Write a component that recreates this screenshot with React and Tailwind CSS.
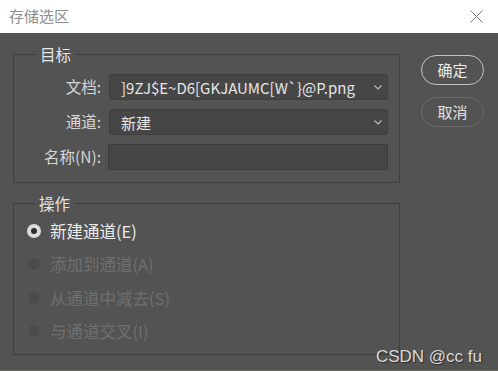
const cjk = "font-['Noto_Sans_CJK_SC','Microsoft_YaHei',sans-serif]"

function Chevron() {
  return (
    <svg width="8" height="5" viewBox="0 0 8 5" className="shrink-0">
      <path d="M0.5 0.5 L4 4 L7.5 0.5" fill="none" stroke="#bcbcbc" strokeWidth="1.1" />
    </svg>
  )
}

function Select({ value }) {
  return (
    <div className="flex h-[26px] flex-1 items-center justify-between rounded-[3px] border border-[#3e3e3e] bg-[#464646] pl-[11px] pr-[5px]">
      <span className="text-[15px] leading-none text-[#e6e6e6]">{value}</span>
      <Chevron />
    </div>
  )
}

function Row({ label, children }) {
  return (
    <div className="flex items-center gap-[8px]">
      <span className="w-[87px] shrink-0 text-right text-[15.5px] leading-none text-[#d6d6d6]">{label}</span>
      {children}
    </div>
  )
}

function Radio({ label, checked }) {
  return (
    <div className="flex h-[33.5px] items-center gap-[9px]">
      {checked ? (
        <span className="flex h-[14px] w-[14px] items-center justify-center rounded-full bg-[#dcdcdc]">
          <span className="h-[6px] w-[6px] rounded-full bg-[#2e2e2e]" />
        </span>
      ) : (
        <span className="h-[14px] w-[14px] rounded-full border border-[#565656] bg-[#4b4b4b]" />
      )}
      <span className={`text-[16.5px] leading-none ${checked ? 'text-[#ececec]' : 'text-[#6f6f6f]'}`}>{label}</span>
    </div>
  )
}

export default function App() {
  return (
    <div className={`relative flex h-[371px] w-[498px] flex-col overflow-hidden ${cjk}`}>
      <div className="flex h-[33px] shrink-0 items-center justify-between bg-white pl-[9px] pr-[15px]">
        <span className="text-[15px] text-[#8d8d8d]">存储选区</span>
        <svg width="13" height="13" viewBox="0 0 13 13">
          <path d="M0.5 0.5 L12.5 12.5 M12.5 0.5 L0.5 12.5" stroke="#7a7a7a" strokeWidth="1" />
        </svg>
      </div>

      <div className="flex flex-1 gap-[21px] bg-[#535353] pl-[13px] pt-[13px]">
        <div className="flex w-[387px] flex-col gap-[12px]">
          <fieldset className="border border-[#3f3f3f] pb-[12px] pr-[11px]">
            <legend className="ml-[22px] px-[4px] text-[15.5px] leading-[16px] text-[#e4e4e4]">目标</legend>
            <div className="flex flex-col gap-[9px] pt-[12px]">
              <Row label="文档:">
                <Select value="]9ZJ$E~D6[GKJAUMC[W`}@P.png" />
              </Row>
              <Row label="通道:">
                <Select value="新建" />
              </Row>
              <Row label="名称(N):">
                <div className="-ml-[1px] h-[26px] flex-1 border border-[#3a3a3a] bg-[#464646]" />
              </Row>
            </div>
          </fieldset>

          <fieldset className="border border-[#3f3f3f] pb-[6px]">
            <legend className="ml-[21px] px-[4px] text-[15.5px] leading-[16px] text-[#e4e4e4]">操作</legend>
            <div className="flex flex-col pl-[13px] pt-[3px]">
              <Radio label="新建通道(E)" checked />
              <Radio label="添加到通道(A)" />
              <Radio label="从通道中减去(S)" />
              <Radio label="与通道交叉(I)" />
            </div>
          </fieldset>
        </div>

        <div className="flex flex-col gap-[12px] pt-[9px]">
          <button className="h-[30px] w-[63px] rounded-full border border-[#c4c4c4] text-[15px] text-[#ececec]">确定</button>
          <button className="h-[30px] w-[63px] rounded-full border border-[#6c6c6c] text-[15px] text-[#e2e2e2]">取消</button>
        </div>
      </div>
      <div className="h-[1px] shrink-0 bg-[#6a6d66]" />

      <span className="absolute bottom-[6px] right-[16px] font-['Liberation_Sans',Arial,sans-serif] text-[17px] leading-none text-[#d9d9d9] [text-shadow:1px_1px_1px_#2a2a2a]">
        CSDN @cc fu
      </span>
    </div>
  )
}
